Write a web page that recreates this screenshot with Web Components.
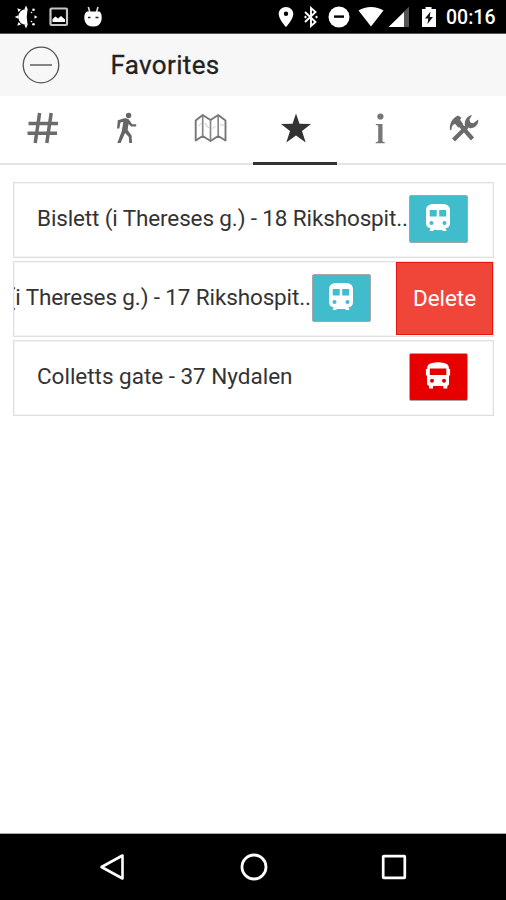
<!DOCTYPE html>
<html lang="en">
<head>
<meta charset="utf-8">
<title>Favorites</title>
<style>
html,body{margin:0;height:100%;background:#fff}
body{font-family:Roboto,"Liberation Sans",sans-serif;color:#333}
</style>
</head>
<body>
<fav-app></fav-app>
<script>
const define = (name, html) => customElements.define(name, class extends HTMLElement {
  constructor() {
    super();
    const t = document.createElement('template');
    t.innerHTML = html;
    this.attachShadow({mode: 'open'}).append(t.content.cloneNode(true));
  }
});

/* Icons share one drawing element; view boxes are in CSS pixels. */
const icons = {
  sun: [24, 24, `<path fill="#fff" d="M13.500 4.200Q5 3.500 4.300 12 5 20.500 13.500 19.800 10.500 12 13.500 4.200z"/><path fill="#fff" d="M12 4.500h1.500q-1.500 7.500 0 15H12z"/><g fill="#fff"><path d="M10.300 4.500l1.700-4L13.700 4.500zM10.300 19.500l1.700 4L13.700 19.500zM4.500 10.300L.7 12 4.500 13.700zM7 4.600L3.200 3.200 4.600 7zM7 19.400l-3.800 1.400L4.600 17zM20.500 10.300L23.500 12l-3 1.700z"/><circle cx="19.500" cy="4.700" r="1.300"/><circle cx="19.500" cy="19.300" r="1.300"/><circle cx="17.500" cy="7.500" r=".8"/><circle cx="17.500" cy="16.500" r=".8"/></g>`],
  image: [20, 20, `<rect x="1.500" y="1.500" width="16.500" height="16.500" rx="1" fill="none" stroke="#c4c4c4" stroke-width="2.200"/><path fill="#fff" d="M3.500 15v-3l3-2.500 2.500 2 3-2.500 4 3.500V15z"/>`],
  droid: [20, 22, `<path d="M5.300 1l1.800 6M15 1l-1.800 6" stroke="#ddd" stroke-width="1.600"/><path fill="#fff" d="M4 5.500h12.500q2.200 1.500 2.200 6 0 5-3 7.500-1.700 1.500-5.500 1.500t-5.700-1.500Q1.300 16 1.300 11.500 1.300 7 4 5.500z"/><path d="M5 11.500h2.500M12.500 11.500h3" stroke="#222" stroke-width="1.300"/>`],
  pin: [16, 22, `<path fill="#fff" d="M8 1C4 1 .7 4.100.7 8c0 5.300 7.300 13 7.300 13s7.300-7.700 7.300-13c0-3.900-3.300-7-7.300-7zm0 4.600a2.200 2.200 0 1 1 0 4.400 2.200 2.200 0 0 1 0-4.400z" fill-rule="evenodd"/>`],
  bluetooth: [16, 22, `<path fill="none" stroke="#fff" stroke-width="1.900" d="M2 6l10.500 10L8 20V2l4.500 4L2 16"/><path fill="#fff" d="M2.500 9.500L4 11l-1.500 1.500L1 11zM13.500 9.500L15 11l-1.500 1.500L12 11z"/>`],
  dnd: [22, 22, `<circle cx="11" cy="11" r="10.500" fill="#fff"/><path d="M6 10.600h10" stroke="#000" stroke-width="2.400"/>`],
  wifi: [26, 22, `<path fill="#fff" d="M.5 4.500Q6 1 13 1t12.500 3.500L13 20.500z"/>`],
  signal: [22, 22, `<path fill="#555" d="M15 6.500L21 .8V21h-6z"/><path fill="#fff" d="M.5 21L16 6V21z"/>`],
  battery: [16, 22, `<path fill="#fff" d="M4.500 1h6v2H15v18H1V3h3.500z"/><path fill="#111" d="M9.500 5.500L4 12.500h3.300L6.500 18 12 11H8.700z"/>`],
  minus: [40, 40, `<circle cx="20" cy="20" r="17.800" fill="none" stroke="#555" stroke-width="1.300"/><path d="M9 20h22" stroke="#777" stroke-width="1.800"/>`],
  hash: [34, 34, `<path fill="none" stroke="#6b6b6b" stroke-width="3.500" d="M13.600 2L9.200 32M25.200 2L20.800 32M2.500 12.500h29.500M1.500 22.200h29.500"/>`],
  walk: [24, 34, `<g transform="translate(-1.200 0)"><circle cx="14.800" cy="4.500" r="2.700" fill="#666"/><path fill="#666" d="M11.500 7l-7.500 2.300-.8 8.200h2.300l1.200-6 2.800-.8L8 20 3.500 32h3.300l4.500-10 3.700 4 .5 6h2.700l-.4-7.500-4-5.500.9-6 2.700 2.500h5v-2.200h-4l-3.600-5z"/></g>`],
  map: [36, 34, `<path fill="none" stroke="#777" stroke-width="1.900" stroke-linejoin="round" d="M2.700 9.500l7-5.500 7.800 5 7.700-5 7.300 5.500v20l-7.300-4.500-7.700 5-7.800-5-7 4.500z"/><path fill="none" stroke="#888" stroke-width="1.700" d="M9.700 4.500v20M17.500 9v20.500M25.200 4.500v20"/><path fill="none" stroke="#bbb" stroke-width=".8" d="M5.500 15l3-3M12 12l2.500 4 2 1M19.500 17.500l3-2M27 14h4"/>`],
  star: [34, 34, `<path fill="#333" d="M17 2.500l3.500 10.300L32 13l-9 7 3.700 11.500L17 24.500l-9.700 7L11 20 2 13l11.500-.2z"/>`],
  info: [14, 34, `<circle cx="7.400" cy="5.500" r="3.100" fill="#777"/><path fill="#777" d="M2.800 13h6.700v17q0 1 2.300 1.200V32.300H2.600v-1.100q2.600-.2 2.600-1.200V15q0-1-2.400-1z"/>`],
  tools: [34, 34, `<path fill="none" stroke="#6b6b6b" stroke-width="4.200" d="M12 12.500l13.500 15.500M6.500 29L20 15.500"/><path fill="#6b6b6b" d="M3 19c-1-7 3-12 8-14.500l3.500 2.300-1.500 2 3 4-4.500 4-3.500-4c-2.500 1-3.500 3-3.500 6zM18 15c-1-5 1.500-10 7-11l-2.500 4.500.8 3 3 .8 5-3.800c.5 6-4.500 9.500-9 8.500z"/>`],
  train: [28, 32, `<path fill="#fff" fill-rule="evenodd" d="M8 2h12q6 1 6 6v13q0 5-4.500 5l1 3h-3.500l-1-1H10L9 29H5.500l1-3Q2 26 2 21V8Q2 3 8 2zM5.700 8v6.500h7V8zm9.500 0v6.500h7V8zM7.500 19a2 2 0 1 0 .01 0zm13 0a2 2 0 1 0 .01 0z"/>`],
  bus: [28, 32, `<path fill="#fff" fill-rule="evenodd" d="M8 3q6-1.500 12 0 5 .8 5 5.500v16l-1.700 1.500V28.500h-4v-2.500H9v2.500H5v-2.500L3 24.500V8.500q0-4.700 5-5.500zM5.800 8.500v6.500h16.500V8.500zM8 18.700a2 2 0 1 0 .01 0zm12 0a2 2 0 1 0 .01 0z"/><path stroke="#fff" stroke-width="1.200" d="M2.500 9v6.500M25.500 9v6.500"/>`],
  back: [28, 32, `<path fill="none" stroke="#fff" stroke-width="2.600" stroke-linejoin="round" d="M23.500 4.500v23L2.500 16z"/>`],
  home: [30, 30, `<circle cx="15" cy="15" r="12" fill="none" stroke="#fff" stroke-width="2.800"/>`],
  recent: [26, 26, `<rect x="2.200" y="2.200" width="21.600" height="21.600" rx=".6" fill="none" stroke="#fff" stroke-width="2.700"/>`]
};
customElements.define('ui-icon', class extends HTMLElement {
  constructor() { super(); this.attachShadow({mode: 'open'}); }
  connectedCallback() {
    const [w, h, art] = icons[this.getAttribute('name')];
    this.shadowRoot.innerHTML = `<style>:host{display:block;flex:none}svg{display:block}</style><svg width="${w}" height="${h}" viewBox="0 0 ${w} ${h}">${art}</svg>`;
  }
});

define('status-bar', `<style>
:host{display:flex;box-sizing:border-box;height:34px;background:#000;color:#fff;justify-content:space-between;padding:1px 11px 0 14px;align-items:center;border-bottom:1px solid #555}
div{display:flex;align-items:center}
.l{gap:11px;padding-bottom:1px}.l ui-icon:nth-child(3){margin-left:3px}
span{font-size:19.500px;font-weight:500;line-height:32px;width:49px;margin-left:9px;white-space:nowrap;padding-top:2px}
</style>
<div class="l"><ui-icon name="sun"></ui-icon><ui-icon name="image"></ui-icon><ui-icon name="droid"></ui-icon></div>
<div><ui-icon name="pin"></ui-icon><ui-icon name="bluetooth" style="margin-left:9px"></ui-icon><ui-icon name="dnd" style="margin-left:9px"></ui-icon><ui-icon name="wifi" style="margin-left:8px"></ui-icon><ui-icon name="signal" style="margin-left:4px"></ui-icon><ui-icon name="battery" style="margin-left:11px"></ui-icon><span>00:16</span></div>`);

define('app-header', `<style>
:host{display:flex;box-sizing:border-box;height:62px;background:#f7f7f7;align-items:center;padding-left:21px;gap:49.500px}
h1{margin:0;font-size:26px;font-weight:400;color:#222;line-height:62px;-webkit-text-stroke:.3px #222;letter-spacing:.35px}
</style><ui-icon name="minus"></ui-icon><h1><slot></slot></h1>`);

define('tab-item', `<style>
:host{display:flex;box-sizing:border-box;height:69px;flex:1;justify-content:center;padding:15px 0 0 1px;border-bottom:2px solid #e5e5e5}
:host([active]){border-bottom:3px solid #333}
</style><slot></slot>`);
define('tab-bar', `<style>:host{display:flex;height:69px}</style><slot></slot>`);

define('line-badge', `<style>
:host{display:flex;box-sizing:border-box;flex:none;width:59px;height:48px;background:var(--c);border:1px solid #a6a6a6;border-radius:2px;justify-content:center;padding-top:6px}
</style><slot></slot>`);

define('fav-row', `<style>
:host{display:flex;box-sizing:border-box;height:76px;border:1px solid #e0e0e0;box-shadow:inset 0 0 0 1px #f4f4f4;overflow:hidden}
.body{display:flex;flex:none;box-sizing:border-box;width:479px;align-items:center;padding:0 25.500px 3px 23px}
:host([swiped]) .body{margin-left:-97px}
.name{flex:1;min-width:0;white-space:nowrap;font-size:22.500px;line-height:30px;letter-spacing:var(--track,-.13px);padding-bottom:1px}
button{flex:none;width:97px;height:73px;margin:0;padding:0 0 1px;border:1px solid #e5160c;background:#f04639;color:#fff;font:400 22.500px Roboto,sans-serif;letter-spacing:-.05px}
:host(:not([swiped])) button{display:none}
</style><div class="body"><div class="name"><slot></slot></div><slot name="badge"></slot></div><button>Delete</button>`);

define('nav-bar', `<style>
:host{display:flex;box-sizing:border-box;height:67px;background:#000;border-top:1px solid #aaa;align-items:center;padding-left:99px}
</style><ui-icon name="back"></ui-icon><ui-icon name="home" style="margin-left:111.500px"></ui-icon><ui-icon name="recent" style="margin-left:112.500px"></ui-icon>`);

define('fav-app', `<style>
:host{display:flex;flex-direction:column;height:900px;width:506px;overflow:hidden}
main{flex:1;display:flex;flex-direction:column;gap:3px;padding:17px 12px 0 13px}
line-badge{--c:#40bccd}.red{--c:#e60000}
</style>
<status-bar></status-bar>
<app-header>Favorites</app-header>
<tab-bar>
<tab-item><ui-icon name="hash"></ui-icon></tab-item><tab-item><ui-icon name="walk"></ui-icon></tab-item><tab-item><ui-icon name="map"></ui-icon></tab-item><tab-item active><ui-icon name="star"></ui-icon></tab-item><tab-item><ui-icon name="info"></ui-icon></tab-item><tab-item><ui-icon name="tools"></ui-icon></tab-item>
</tab-bar>
<main>
<fav-row>Bislett (i Thereses g.) - 18 Rikshospit..<line-badge slot="badge"><ui-icon name="train"></ui-icon></line-badge></fav-row>
<fav-row swiped>Bislett (i Thereses g.) - 17 Rikshospit..<line-badge slot="badge"><ui-icon name="train"></ui-icon></line-badge></fav-row>
<fav-row style="--track:-.02px">Colletts gate - 37 Nydalen<line-badge class="red" slot="badge"><ui-icon name="bus"></ui-icon></line-badge></fav-row>
</main>
<nav-bar></nav-bar>`);
</script>
</body>
</html>
